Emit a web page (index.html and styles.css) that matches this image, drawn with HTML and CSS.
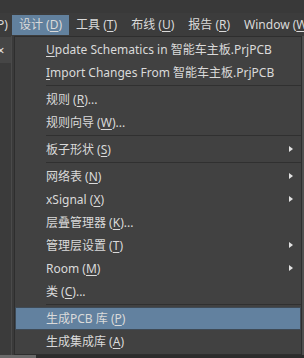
FILE: index.html
```html
<!DOCTYPE html>
<html lang="zh-CN">
<head>
    <meta charset="UTF-8">
    <meta name="viewport" content="width=device-width, initial-scale=1.0">
    <title>设计菜单</title>
    <link rel="stylesheet" href="styles.css">
</head>
<body>
    <div class="topstrip"></div>

    <div class="menubar">
        <span class="mb-item cut">P)</span>
        <span class="mb-item active">设计 (<u>D</u>)</span>
        <span class="mb-item">工具 (<u>T</u>)</span>
        <span class="mb-item">布线 (<u>U</u>)</span>
        <span class="mb-item">报告 (<u>R</u>)</span>
        <span class="mb-item">Window (<u>W</u>)</span>
    </div>

    <div class="workspace">
        <div class="sidepanel">
            <div class="tab"><span class="close">×</span></div>
        </div>

        <ul class="dropdown">
            <li class="item"><u>U</u>pdate Schematics in 智能车主板.PrjPCB</li>
            <li class="item"><u>I</u>mport Changes From 智能车主板.PrjPCB</li>
            <li class="sep"></li>
            <li class="item">规则 (<u>R</u>)...</li>
            <li class="item">规则向导 (<u>W</u>)...</li>
            <li class="sep"></li>
            <li class="item sub">板子形状 (<u>S</u>)</li>
            <li class="sep"></li>
            <li class="item sub">网络表 (<u>N</u>)</li>
            <li class="item sub">xSignal (<u>X</u>)</li>
            <li class="item">层叠管理器 (<u>K</u>)...</li>
            <li class="item sub">管理层设置 (<u>T</u>)</li>
            <li class="item sub">Room (<u>M</u>)</li>
            <li class="item">类 (<u>C</u>)...</li>
            <li class="sep"></li>
            <li class="item hover">生成PCB 库 (<u>P</u>)</li>
            <li class="item">生成集成库 (<u>A</u>)</li>
        </ul>

        <div class="edge"></div>
    </div>

    <div class="ruler"><span class="ruler-thumb"></span></div>
</body>
</html>
```

FILE: styles.css
```css
body {
    margin: 0;
    width: 304px;
    height: 358px;
    overflow: hidden;
    background: #3a3a3a;
    font-family: "Noto Sans", "Noto Sans CJK SC", sans-serif;
    font-size: 12px;
    color: #dadada;
}
u {
    text-decoration-thickness: 1px;
    text-underline-offset: 2px;
}
.topstrip {
    height: 13px;
    background: #393939;
}
.menubar {
    display: flex;
    height: 23px;
    background: #3c3c3c;
    white-space: nowrap;
}
.mb-item {
    flex: none;
    height: 20px;
    margin-top: 2px;
    padding: 0 7px;
    line-height: 20px;
}
.mb-item.cut {
    width: 15px;
    padding: 0;
    margin-left: -3px;
    box-sizing: border-box;
}
.mb-item.active {
    background: #62819e;
}
.workspace {
    display: flex;
    height: 319px;
}
.sidepanel {
    flex: none;
    width: 11px;
    border-right: 1px solid #4a4a4a;
    margin-right: 2px;
    background: #3b3b3b;
}
.tab {
    height: 26px;
    margin-top: 1px;
    background: #464646;
    overflow: hidden;
}
.close {
    display: block;
    margin-left: -3px;
    line-height: 26px;
    font-size: 13px;
    color: #e6e6e6;
}
.dropdown {
    flex: none;
    width: 286px;
    margin: 0;
    padding: 1px 0;
    list-style: none;
    background: #414141;
    border: 1px solid #2e2e2e;
}
.item {
    position: relative;
    height: 23px;
    padding-left: 31px;
    line-height: 23px;
    white-space: nowrap;
}
.item.sub::after {
    content: "";
    position: absolute;
    right: 8px;
    top: 8px;
    border-left: 4px solid #e2e2e2;
    border-top: 3.5px solid transparent;
    border-bottom: 3.5px solid transparent;
}
.item.hover {
    background: #62819f;
    box-shadow: inset 0 0 0 1px #3f4a55;
}
.sep {
    height: 1px;
    margin: 1px 0 2px 31px;
    background: #303030;
}
.edge {
    flex: 1;
    background: #4f4f4f;
}
.ruler {
    height: 3px;
    background: #2c2c2c;
}
.ruler-thumb {
    display: block;
    width: 36px;
    height: 3px;
    background: #6a6a6a;
}
```
